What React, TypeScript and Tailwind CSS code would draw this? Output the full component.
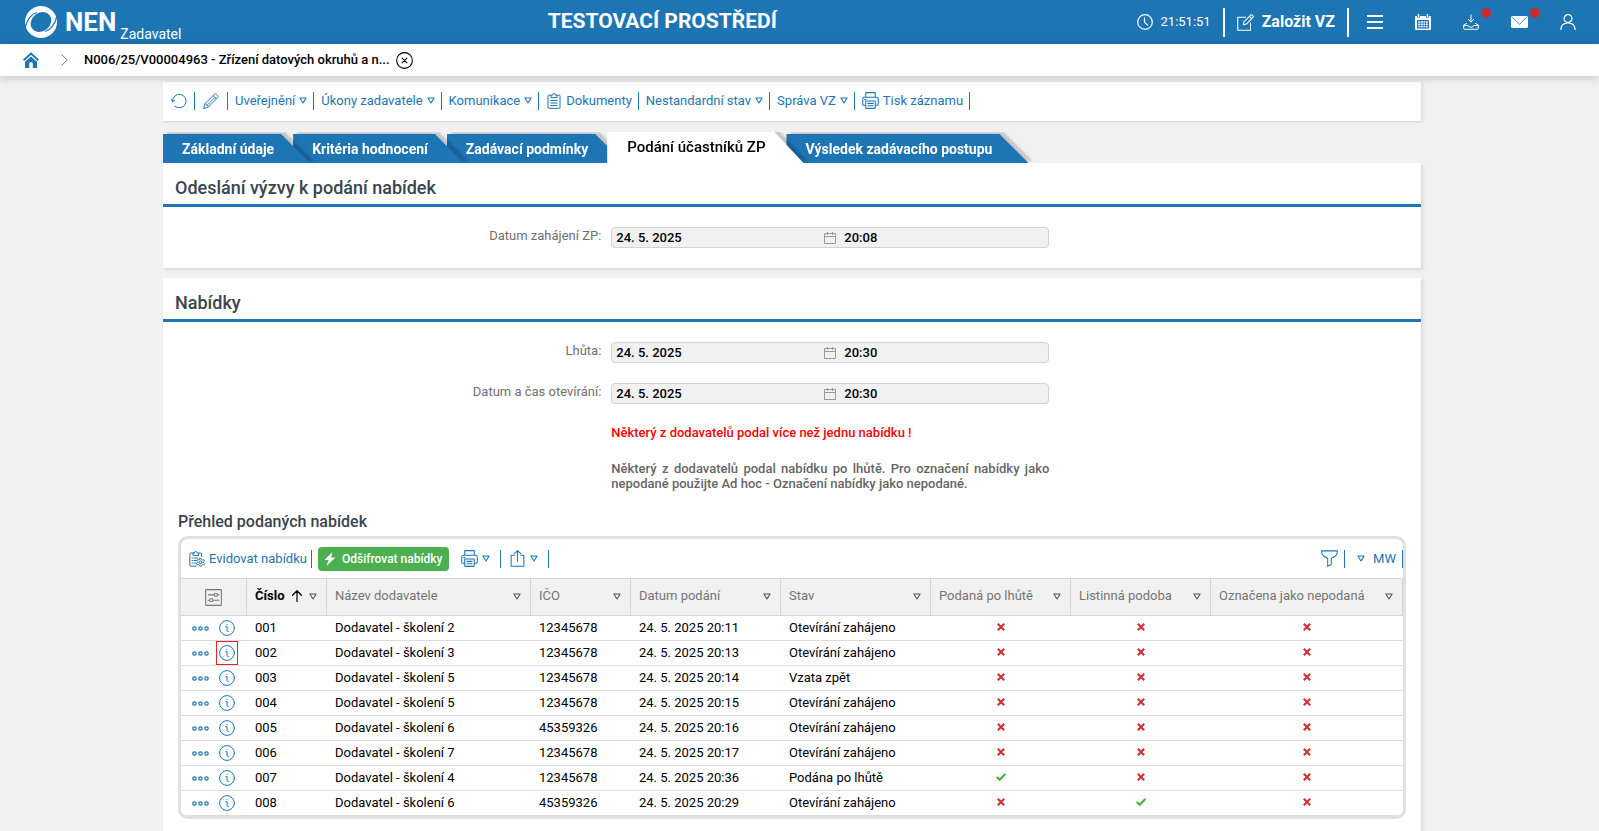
import React from "react";
import clsx from "clsx";

type IconProps = { className?: string };

// Base svg wrapper
const Icon = ({ className, children }: IconProps & { children: React.ReactNode }) => (
  <svg
    viewBox="0 0 16 16"
    fill="none"
    stroke="currentColor"
    strokeLinecap="round"
    strokeLinejoin="round"
    aria-hidden="true"
    className={clsx("shrink-0", className ?? "w-4 h-4")}
  >
    {children}
  </svg>
);

const Caret = ({ className }: IconProps) => (
  <svg viewBox="0 0 8 7" fill="none" stroke="currentColor" strokeWidth="1.1" aria-hidden="true" className={clsx("w-2 h-[7px] shrink-0", className)}>
    <path d="M.9 1h6.2L4 6z" strokeLinejoin="round" />
  </svg>
);

const Logo = () => (
  <svg viewBox="0 0 32 32" className="w-8 h-8 shrink-0" aria-hidden="true">
    <circle cx="16" cy="16" r="16" fill="#fff" />
    <ellipse cx="16" cy="16" rx="11" ry="9.300" fill="#1d75b4" transform="rotate(-40 16 16)" />
    <path d="M0 22C2 14 5 8.500 12 6.500" fill="none" stroke="#1d75b4" strokeWidth="1.200" />
    <path d="M32 10C30 18 27 23.500 20 25.500" fill="none" stroke="#1d75b4" strokeWidth="1.200" />
  </svg>
);

const HomeIcon = () => (
  <svg viewBox="0 0 16 16" className="w-4 h-4" fill="currentColor" aria-hidden="true">
    <path d="M8 4.600L2 9.800V16h4.200v-4.200a1.800 1.800 0 0 1 3.600 0V16H14V9.800z" />
    <path d="M.6 8.200L8 1.500l7.400 6.700" fill="none" stroke="currentColor" strokeWidth="1.900" />
  </svg>
);

const ClockIcon = () => (
  <Icon>
    <circle cx="8" cy="8" r="7.300" strokeWidth="1.200" />
    <path d="M7.500 3.800v4.400l3 3" strokeWidth="1.200" />
  </Icon>
);

const ComposeIcon = () => (
  <Icon className="w-[17px] h-[17px]">
    <path d="M8 3H.7v12.300h12V8.500" />
    <path d="M6 10.200l.6-2.900L13 .9q.6-.5 1.200 0l.9.9q.5.600 0 1.200L8.900 9.500zM11.700 2.200l2 2" />
  </Icon>
);

const MenuIcon = () => (
  <Icon className="w-4 h-4">
    <path d="M0 2h16M0 8h16M0 14h16" strokeWidth="2" strokeLinecap="butt" />
  </Icon>
);

const CalendarSolidIcon = () => (
  <svg viewBox="0 0 16 16" className="w-4 h-4" aria-hidden="true">
    <path d="M.8 2h14.400q.8 0 .8.800V15q0 1-1 1H1q-1 0-1-1V2.800Q0 2 .8 2z" fill="#fff" />
    <path d="M2 6h12v8.500H2z" fill="#1d75b4" />
    <path d="M3.300 7.200h2v1.600h-2zM6 7.200h1.800v1.600H6zM8.500 7.200h1.800v1.600H8.500zM11 7.200h1.800v1.600H11zM3.300 9.500h2v1.500h-2zM6 9.500h1.800V11H6zM8.500 9.500h1.800V11H8.500zM11 9.500h1.800V11H11zM3.300 11.800h2v1.500h-2zM6 11.800h1.800v1.500H6zM8.500 11.800h1.800v1.500H8.500zM11 11.800h1.800v1.500H11z" fill="#fff" />
    <path d="M3.500.8v3M12.500.8v3" stroke="#1d75b4" strokeWidth="3" />
    <path d="M3.500 0v3.500M12.500 0v3.500" stroke="#fff" strokeWidth="1.500" />
  </svg>
);

const DownloadIcon = () => (
  <Icon>
    <path d="M8 .8v7M5.300 5.300L8 8l2.700-2.700" />
    <path d="M3.500 9.500L.7 11v3.300q0 1 1 1h12.600q1 0 1-1V11l-2.800-1.500M.7 11.500h4.600q.4 1.800 2.700 1.800t2.700-1.800h4.600" />
  </Icon>
);

const MailIcon = () => (
  <svg viewBox="0 0 17 12" className="w-[17px] h-3" aria-hidden="true">
    <rect width="17" height="12" rx="1.500" fill="#fff" />
    <path d="M1.200 1l7.300 7.200L15.800 1" fill="none" stroke="#1d75b4" strokeWidth=".9" />
  </svg>
);

const UserIcon = () => (
  <Icon>
    <circle cx="8" cy="4.500" r="3.900" strokeWidth="1.200" />
    <path d="M1 15.700q0-6.700 7-6.700t7 6.700" strokeWidth="1.200" />
  </Icon>
);

const RefreshIcon = () => (
  <Icon>
    <path d="M1.500 8.500a6.800 6.800 0 1 1 2.300 4.700M.3 6.500l1.300 2.300 2.200-1.600" />
  </Icon>
);

const PencilIcon = () => (
  <Icon>
    <path d="M.7 15.300l1.500-4.800L11.800.9q.6-.5 1.300.1l1.900 1.900q.6.600.1 1.200L5.500 13.800zM10 2.700l3.300 3.300M2.200 10.500l3.300 3.300M4.200 12.200l8-8" strokeWidth=".9" />
  </Icon>
);

const ClipboardIcon = () => (
  <Icon>
    <path d="M5 2.200H2.700q-.7 0-.7.700v11.700q0 .7.700.7h10.600q.7 0 .7-.7V2.900q0-.7-.7-.7H11" />
    <path d="M5 4.300V2.200h1.300q.2-1.700 1.700-1.700t1.700 1.700H11v2.100zM4.800 7.500h6.400M4.800 10h6.400M4.800 12.500h6.400" />
  </Icon>
);

const ClipboardGearIcon = () => (
  <Icon>
    <path d="M5 2H1.700q-.9 0-.9.900v11.400q0 .9.900.9h5.500M9.500 2h2.300q.8 0 .8.900v2.800M4 4V2h1.200q.2-1.500 1.500-1.500T8.200 2h1.300v2zM3 7h1M5.500 7h3M3 9.500h1M5.500 9.500h1.800M3 12h1M5.500 12h1.200" />
    <circle cx="11.500" cy="11.300" r="1.400" />
    <path d="M10.800 7.400h1.400l.3 1.100 1.200.6 1-.4.800 1.300-.8.700v1.200l.8.800-.8 1.300-1-.4-1.200.6-.3 1.100h-1.400l-.3-1.100-1.200-.6-1 .4-.8-1.300.8-.8v-1.200l-.8-.7.800-1.300 1 .4 1.200-.6z" />
  </Icon>
);

const PrinterIcon = () => (
  <Icon className="w-[17px] h-[17px]">
    <path d="M3.500 4.500V1q0-.4.400-.4h8.200q.4 0 .4.400v3.500M3.500 12.500H1.700q-1 0-1-1v-5q0-1.500 1.500-1.500h11.600q1.500 0 1.500 1.500v5q0 1-1 1h-1.800M3.500 8.500h9v6.400q0 .5-.5.500H4q-.5 0-.5-.5zM5.500 10.700h5M5.500 13h5M2.500 7h1" />
  </Icon>
);

const ShareIcon = () => (
  <Icon className="w-[17px] h-[17px]">
    <path d="M5 5H2v10.300h12V5h-3M8 10.500V.8M5 3.500l3-3 3 3" />
  </Icon>
);

const FilterIcon = () => (
  <Icon className="w-[17px] h-[17px]">
    <path d="M.6.800h14.800v1q0 3.600-5.700 6v5.600L6.300 15.400V7.800Q.6 5.400.6 1.800z" />
  </Icon>
);

const BoltIcon = () => (
  <svg viewBox="0 0 12 14" className="w-3 h-3.5 shrink-0" fill="currentColor" aria-hidden="true">
    <path d="M8.500 0L.5 8h4l-2 6L11.500 5.600H7z" />
  </svg>
);

const SettingsIcon = () => (
  <Icon className="w-[17px] h-[17px]">
    <rect x=".6" y=".6" width="14.800" height="14.800" rx=".8" />
    <path d="M3 5.500h5.500M12 5.500h1M3 10.500h1.200M7.700 10.500H13" />
    <circle cx="10.200" cy="5.500" r="1.500" />
    <circle cx="6" cy="10.500" r="1.500" />
  </Icon>
);

const DotsIcon = () => (
  <svg viewBox="0 0 17 5" className="w-[17px] h-[5px]" fill="none" stroke="currentColor" strokeWidth="1.200" aria-hidden="true">
    <circle cx="2.500" cy="2.500" r="1.700" />
    <circle cx="8.500" cy="2.500" r="1.700" />
    <circle cx="14.500" cy="2.500" r="1.700" />
  </svg>
);

const InfoIcon = () => (
  <Icon>
    <circle cx="8" cy="8" r="7.400" />
    <path d="M6.800 6.700h1.300v4q0 .9 1.200.9M8 4.300v.2" />
  </Icon>
);

const DateIcon = () => (
  <svg viewBox="0 0 12 12" className="w-3 h-3 shrink-0 text-[#9a9a9a]" fill="none" stroke="currentColor" aria-hidden="true">
    <path d="M.5 1.500h11v10H.5zM.5 4.500h11M3.500 0v3M8.500 0v3" />
  </svg>
);

const CrossIcon = () => (
  <svg viewBox="0 0 8 8" className="w-2 h-2 mx-auto" role="img" aria-label="Ne">
    <path d="M.8.800l6.400 6.400M7.200.800L.8 7.200" stroke="#d0302f" strokeWidth="2.100" />
  </svg>
);

const CheckIcon = () => (
  <svg viewBox="0 0 10 8" className="w-2.5 h-2 mx-auto" role="img" aria-label="Ano">
    <path d="M.7 4l3 2.800L9.400.9" fill="none" stroke="#37b637" strokeWidth="2" />
  </svg>
);

const Sep = () => <span className="w-px h-[18px] bg-[#1d75b4] shrink-0" />;

const Header = () => (
  <header className="flex items-center h-11 bg-[#1d75b4] text-white">
    <a href="#" className="flex items-center w-[34%] h-full pl-[25px]">
      <Logo />
      <span className="pl-2 text-[26px] font-bold">NEN</span>
      <span className="self-end pl-1 text-sm">Zadavatel</span>
    </a>
    <h1 className="pl-1 text-[21px] font-bold">TESTOVACÍ PROSTŘEDÍ</h1>
    <div className="flex items-center ml-auto pr-[23px]">
      <ClockIcon />
      <span className="pl-2 pr-3 text-[13px]">21:51:51</span>
      <span className="w-0.5 h-[29px] bg-white" />
      <button type="button" className="flex items-center gap-2 px-3 font-bold">
        <ComposeIcon />
        Založit VZ
      </button>
      <span className="w-0.5 h-[29px] bg-white" />
      <nav className="flex items-center gap-8 pl-[18px]">
        <button type="button" aria-label="Menu"><MenuIcon /></button>
        <button type="button" aria-label="Kalendář"><CalendarSolidIcon /></button>
        <button type="button" aria-label="Stažení" className="relative">
          <DownloadIcon />
          <span className="absolute -top-1.5 -right-3 w-2.5 h-2.5 rounded-full bg-[#cb2a2c]" />
        </button>
        <button type="button" aria-label="Zprávy" className="relative">
          <MailIcon />
          <span className="absolute -top-2 -right-3 w-2.5 h-2.5 rounded-full bg-[#cb2a2c]" />
        </button>
        <button type="button" aria-label="Uživatel"><UserIcon /></button>
      </nav>
    </div>
  </header>
);

const Breadcrumb = () => (
  <nav className="relative z-10 flex items-center h-8 pl-[23px] bg-white text-[13px] shadow-[0_2px_10px_rgba(0,0,0,0.18)]">
    <a href="#" aria-label="Domů" className="text-[#1d75b4]"><HomeIcon /></a>
    <svg viewBox="0 0 7 12" className="w-[7px] h-3 ml-[22px] mr-4" fill="none" stroke="#777" aria-hidden="true">
      <path d="M.5.500L6.300 6 .5 11.500" />
    </svg>
    <a href="#" className="font-medium text-black">N006/25/V00004963 - Zřízení datových okruhů a n...</a>
    <button type="button" aria-label="Zavřít" className="ml-1.5">
      <Icon className="w-[17px] h-[17px]">
        <circle cx="8" cy="8" r="7.400" />
        <path d="M5.800 5.800l4.400 4.400M10.200 5.800l-4.400 4.400" />
      </Icon>
    </button>
  </nav>
);

const menu = [
  { label: "Uveřejnění", caret: true },
  { label: "Úkony zadavatele", caret: true },
  { label: "Komunikace", caret: true },
  { label: "Dokumenty", icon: ClipboardIcon },
  { label: "Nestandardní stav", caret: true },
  { label: "Správa VZ", caret: true },
  { label: "Tisk záznamu", icon: PrinterIcon },
];

const Toolbar = () => (
  <div className="flex items-center h-10 mt-1.5 pl-2 pb-0.5 bg-white border-b border-[#dcdcdc] text-[13px] text-[#1d75b4] shadow-[2px_0_3px_rgba(0,0,0,0.08)]">
    <button type="button" aria-label="Obnovit" className="pr-[7px]"><RefreshIcon /></button>
    <Sep />
    <button type="button" aria-label="Upravit" className="px-2"><PencilIcon /></button>
    <Sep />
    {menu.map(({ label, caret, icon: MenuItemIcon }) => (
      <React.Fragment key={label}>
        <button type="button" className="flex items-center gap-1 pl-[7px] pr-1.5">
          {MenuItemIcon && <MenuItemIcon />}
          {label}
          {caret && <Caret />}
        </button>
        <Sep />
      </React.Fragment>
    ))}
  </div>
);

const tabs = [
  { label: "Základní údaje", z: "z-30" },
  { label: "Kritéria hodnocení", z: "z-20" },
  { label: "Zadávací podmínky", z: "z-10" },
  { label: "Podání účastníků ZP", z: "z-40", active: true },
  { label: "Výsledek zadávacího postupu", z: "z-0" },
];

const Tabs = () => (
  <div role="tablist" className="isolate flex items-end h-[31px] mt-2.5 overflow-hidden">
    {tabs.map(({ label, z, active }, i) => (
      <div
        key={label}
        className={clsx(
          "relative shrink-0 drop-shadow-[4px_-2px_1px_rgba(0,0,0,0.18)]",
          z,
          i > 0 && "-ml-[17px]"
        )}
      >
        <button
          type="button"
          role="tab"
          aria-selected={!!active}
          className={clsx(
            "block [clip-path:polygon(0_0,calc(100%-29px)_0,100%_100%,0_100%)]",
            active
              ? "h-[31px] pl-5 pr-[38px] bg-white text-black text-[15px] font-medium"
              : "h-[29px] pl-[19px] pr-9 bg-[#1d75b4] text-white text-sm font-bold"
          )}
        >
          {label}
        </button>
      </div>
    ))}
  </div>
);

const SectionTitle = ({ children }: { children: string }) => (
  <h2 className="px-3 pt-[11px] pb-1 h-11 border-b-3 border-[#1d75b4] text-lg font-medium text-[#39444e]">
    {children}
  </h2>
);

const DateField = ({ id, label, date, time }: { id: string; label: string; date: string; time: string }) => (
  <div className="flex h-[21px] text-[13px]">
    <label htmlFor={id} className="w-[35%] pr-0.5 leading-[17px] text-right text-[#6f6f6f]">{label}</label>
    <div className="flex items-center w-[438px] ml-2 px-1 border border-[#d2d2d2] rounded bg-[#f1f1f1] font-medium text-black">
      <input id={id} readOnly defaultValue={date} className="w-[208px] outline-none" />
      <DateIcon />
      <input aria-label={`${label} čas`} readOnly defaultValue={time} className="w-24 ml-2 outline-none" />
    </div>
  </div>
);

const columns = [
  { label: "Číslo", width: "w-[80px]", sorted: true },
  { label: "Název dodavatele", width: "w-[204px]" },
  { label: "IČO", width: "w-[100px]" },
  { label: "Datum podání", width: "w-[150px]" },
  { label: "Stav", width: "w-[150px]" },
  { label: "Podaná po lhůtě", width: "w-[140px]" },
  { label: "Listinná podoba", width: "w-[140px]" },
  { label: "Označena jako nepodaná", width: "w-auto" },
];

const rows = [
  { no: "001", supplier: "Dodavatel - školení 2", ico: "12345678", date: "24. 5. 2025 20:11", state: "Otevírání zahájeno", late: false, paper: false },
  { no: "002", supplier: "Dodavatel - školení 3", ico: "12345678", date: "24. 5. 2025 20:13", state: "Otevírání zahájeno", late: false, paper: false, marked: true },
  { no: "003", supplier: "Dodavatel - školení 5", ico: "12345678", date: "24. 5. 2025 20:14", state: "Vzata zpět", late: false, paper: false },
  { no: "004", supplier: "Dodavatel - školení 5", ico: "12345678", date: "24. 5. 2025 20:15", state: "Otevírání zahájeno", late: false, paper: false },
  { no: "005", supplier: "Dodavatel - školení 6", ico: "45359326", date: "24. 5. 2025 20:16", state: "Otevírání zahájeno", late: false, paper: false },
  { no: "006", supplier: "Dodavatel - školení 7", ico: "12345678", date: "24. 5. 2025 20:17", state: "Otevírání zahájeno", late: false, paper: false },
  { no: "007", supplier: "Dodavatel - školení 4", ico: "12345678", date: "24. 5. 2025 20:36", state: "Podána po lhůtě", late: true, paper: false },
  { no: "008", supplier: "Dodavatel - školení 6", ico: "45359326", date: "24. 5. 2025 20:29", state: "Otevírání zahájeno", late: false, paper: true },
];

const TableToolbar = () => (
  <div className="flex items-center h-[39px] pl-2 text-[13px] text-[#1d75b4]">
    <button type="button" className="flex items-center gap-1 pr-1">
      <ClipboardGearIcon />
      Evidovat nabídku
    </button>
    <Sep />
    <button type="button" className="flex items-center gap-1.5 h-6 ml-1.5 mr-3 px-1.5 rounded bg-[#4caf50] text-xs font-medium text-white">
      <BoltIcon />
      Odšifrovat nabídky
    </button>
    <button type="button" aria-label="Tisk" className="flex items-center gap-1 pr-2.5"><PrinterIcon /><Caret /></button>
    <Sep />
    <button type="button" aria-label="Export" className="flex items-center gap-1 pl-2 pr-2.5"><ShareIcon /><Caret /></button>
    <Sep />
    <div className="flex items-center ml-auto">
      <button type="button" aria-label="Filtr" className="pr-1.5"><FilterIcon /></button>
      <Sep />
      <button type="button" className="flex items-center gap-2 pl-3 pr-1.5"><Caret />MW</button>
      <Sep />
    </div>
  </div>
);

const OffersTable = () => (
  <table className="w-full table-fixed border-separate border-spacing-0 text-[13px]">
    <thead className="bg-[#f1f1f1] text-left text-[#757575]">
      <tr className="h-[38px]">
        <th className="w-[66px] border-y border-r border-[#d5d5d5] p-0">
          <button type="button" aria-label="Nastavení sloupců" className="block mx-auto"><SettingsIcon /></button>
        </th>
        {columns.map(({ label, width, sorted }) => (
          <th
            key={label}
            className={clsx("border-y border-r border-[#d5d5d5] px-2 pt-0 pb-0.5 whitespace-nowrap", width, sorted ? "font-bold text-black" : "font-normal")}
          >
            <div className="flex items-center">
              {label}
              {sorted && (
                <Icon className="w-3 h-3 ml-1.5">
                  <path d="M8 15.500V1M2 7l6-6 6 6" strokeWidth="1.600" />
                </Icon>
              )}
              <Caret className="ml-auto mr-px text-[#555]" />
            </div>
          </th>
        ))}
      </tr>
    </thead>
    <tbody className="text-black [&_td]:border-b [&_td]:border-[#dcdcdc]">
      {rows.map((row) => (
        <tr key={row.no} className="h-[25px]">
          <td className="p-0">
            <div className="flex items-center h-6 pl-[11px] gap-[7px] text-[#1d75b4]">
              <button type="button" aria-label="Akce"><DotsIcon /></button>
              <button
                type="button"
                aria-label="Detail"
                className={clsx("flex items-center justify-center w-[22px] h-6 border", row.marked ? "border-[#e8202a]" : "border-transparent")}
              >
                <InfoIcon />
              </button>
            </div>
          </td>
          <td className="px-2 py-0">{row.no}</td>
          <td className="px-2 py-0">{row.supplier}</td>
          <td className="px-2 py-0">{row.ico}</td>
          <td className="px-2 py-0">{row.date}</td>
          <td className="px-2 py-0">{row.state}</td>
          <td className="pt-0 px-0 pb-0.5">{row.late ? <CheckIcon /> : <CrossIcon />}</td>
          <td className="pt-0 px-0 pb-0.5">{row.paper ? <CheckIcon /> : <CrossIcon />}</td>
          <td className="pt-0 px-0 pb-0.5"><CrossIcon /></td>
        </tr>
      ))}
    </tbody>
  </table>
);

export default function App() {
  return (
    <div className="flex flex-col min-h-screen bg-[#f1f1f1] font-[Roboto,sans-serif]">
      <Header />
      <Breadcrumb />
      <main className="flex flex-col flex-1 pr-[15px]">
        <div className="flex flex-col flex-1 w-full max-w-[1258px] mx-auto">
          <Toolbar />
          <Tabs />

          <section className="pb-5 bg-white shadow-[2px_2px_3px_rgba(0,0,0,0.1)]">
            <SectionTitle>Odeslání výzvy k podání nabídek</SectionTitle>
            <div className="pt-5">
              <DateField id="start" label="Datum zahájení ZP:" date="24. 5. 2025" time="20:08" />
            </div>
          </section>

          <section className="flex-1 mt-2.5 bg-white shadow-[2px_2px_3px_rgba(0,0,0,0.1)]">
            <SectionTitle>Nabídky</SectionTitle>
            <div className="flex flex-col gap-5 pt-5">
              <DateField id="deadline" label="Lhůta:" date="24. 5. 2025" time="20:30" />
              <DateField id="opening" label="Datum a čas otevírání:" date="24. 5. 2025" time="20:30" />
              <div className="w-[438px] ml-[calc(35%+8px)] text-[13px] leading-[15px] font-medium">
                <p className="pt-px text-[#ff0000]">Některý z dodavatelů podal více než jednu nabídku !</p>
                <p className="pt-[21px] text-justify text-[#666]">
                  Některý z dodavatelů podal nabídku po lhůtě. Pro označení nabídky jako nepodané použijte Ad hoc - Označení
                  nabídky jako nepodané.
                </p>
              </div>
            </div>
            <div className="px-[15px] pt-[15px] pb-3">
              <h3 className="pt-1 pb-0.5 text-base font-medium text-[#39444e]">Přehled podaných nabídek</h3>
              <div className="border-3 border-[#dee0e1] rounded-[10px] overflow-hidden">
                <TableToolbar />
                <OffersTable />
              </div>
            </div>
          </section>
        </div>
      </main>
    </div>
  );
}
